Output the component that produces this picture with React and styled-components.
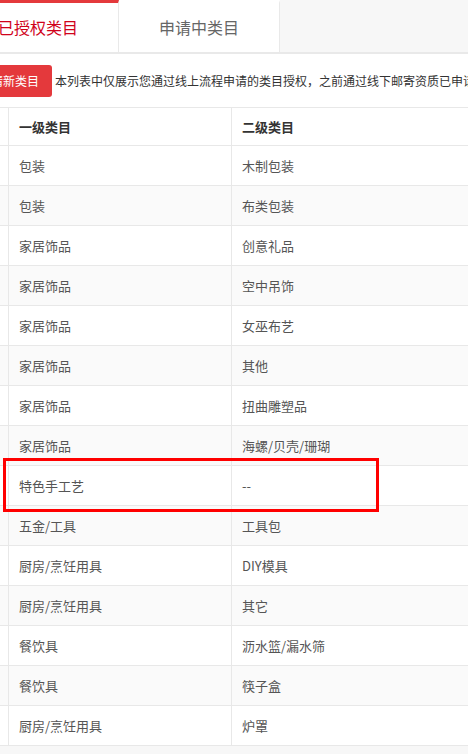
import styled, { createGlobalStyle } from "styled-components";

const GlobalStyle = createGlobalStyle`
  html, body {
    margin: 0;
    padding: 0;
    background: #f7f7f7;
    overflow: hidden;
    font-family: "Noto Sans CJK SC", "Noto Sans", sans-serif;
  }
`;

const rows = [
  ["包装", "木制包装"],
  ["包装", "布类包装"],
  ["家居饰品", "创意礼品"],
  ["家居饰品", "空中吊饰"],
  ["家居饰品", "女巫布艺"],
  ["家居饰品", "其他"],
  ["家居饰品", "扭曲雕塑品"],
  ["家居饰品", "海螺/贝壳/珊瑚"],
  ["特色手工艺", "--"],
  ["五金/工具", "工具包"],
  ["厨房/烹饪用具", "DIY模具"],
  ["厨房/烹饪用具", "其它"],
  ["餐饮具", "沥水篮/漏水筛"],
  ["餐饮具", "筷子盒"],
  ["厨房/烹饪用具", "炉罩"],
];

function App() {
  return (
    <Page>
      <GlobalStyle />
      <Shift>
        <Tabs>
          <Tab $active>已授权类目</Tab>
          <Tab>申请中类目</Tab>
        </Tabs>
        <Toolbar>
          <ApplyBtn>申请新类目</ApplyBtn>
          <Notice>
            本列表中仅展示您通过线上流程申请的类目授权，之前通过线下邮寄资质已申请的类目不在此列表中
          </Notice>
        </Toolbar>
        <Table>
          <HeadRow>
            <SideCell />
            <Cell $head>一级类目</Cell>
            <Cell $head>二级类目</Cell>
          </HeadRow>
          {rows.map(([first, second], i) => (
            <Row key={i} $striped={i % 2 === 1}>
              <SideCell />
              <Cell>{first}</Cell>
              <Cell>{second}</Cell>
            </Row>
          ))}
        </Table>
      </Shift>
      <Highlight />
    </Page>
  );
}

const Page = styled.div`
  position: relative;
  width: 468px;
  height: 754px;
  overflow: hidden;
`;

const Shift = styled.div`
  margin-left: -42px;
  width: 720px;
`;

const Tabs = styled.div`
  display: flex;
  height: 52px;
  background: #f7f7f7;
  border-bottom: 2px solid #e9e9e9;
`;

const Tab = styled.div`
  width: 161px;
  box-sizing: border-box;
  background: #fff;
  border-top: 3px solid ${(p) => (p.$active ? "#e4393c" : "#fff")};
  border-right: 1px solid #e9e9e9;
  text-align: center;
  line-height: 48px;
  font-size: 16px;
  color: ${(p) => (p.$active ? "#d0021b" : "#666")};
`;

const Toolbar = styled.div`
  display: flex;
  align-items: center;
  height: 53px;
  padding-left: 9px;
  background: #fff;
`;

const ApplyBtn = styled.button`
  height: 32px;
  padding: 0 13px 0 12px;
  border: none;
  border-radius: 3px;
  background: #e4393c;
  color: #fff;
  font-family: inherit;
  font-size: 12px;
  white-space: nowrap;
`;

const Notice = styled.span`
  margin-left: 3px;
  font-size: 12px;
  color: #333;
  white-space: nowrap;
`;

const Table = styled.div`
  background: #fff;
  border-top: 1px solid #e8e8e8;
`;

const HeadRow = styled.div`
  display: grid;
  grid-template-columns: 51px 223px 1fr;
  height: 37px;
  border-bottom: 1px solid #e8e8e8;
`;

const Row = styled.div`
  display: grid;
  grid-template-columns: 51px 223px 1fr;
  height: 39px;
  border-bottom: 1px solid #e8e8e8;
  background: ${(p) => (p.$striped ? "#fafafa" : "#fff")};
`;

const SideCell = styled.div`
  border-right: 1px solid #e8e8e8;
`;

const Cell = styled.div`
  display: flex;
  align-items: center;
  padding-left: 10px;
  border-right: 1px solid #e8e8e8;
  font-size: 13px;
  color: ${(p) => (p.$head ? "#333" : "#555")};
  font-weight: ${(p) => (p.$head ? 700 : 400)};
`;

const Highlight = styled.div`
  position: absolute;
  left: 3px;
  top: 458px;
  width: 376px;
  height: 54px;
  box-sizing: border-box;
  border: 3px solid #ff0000;
`;

export default App;
